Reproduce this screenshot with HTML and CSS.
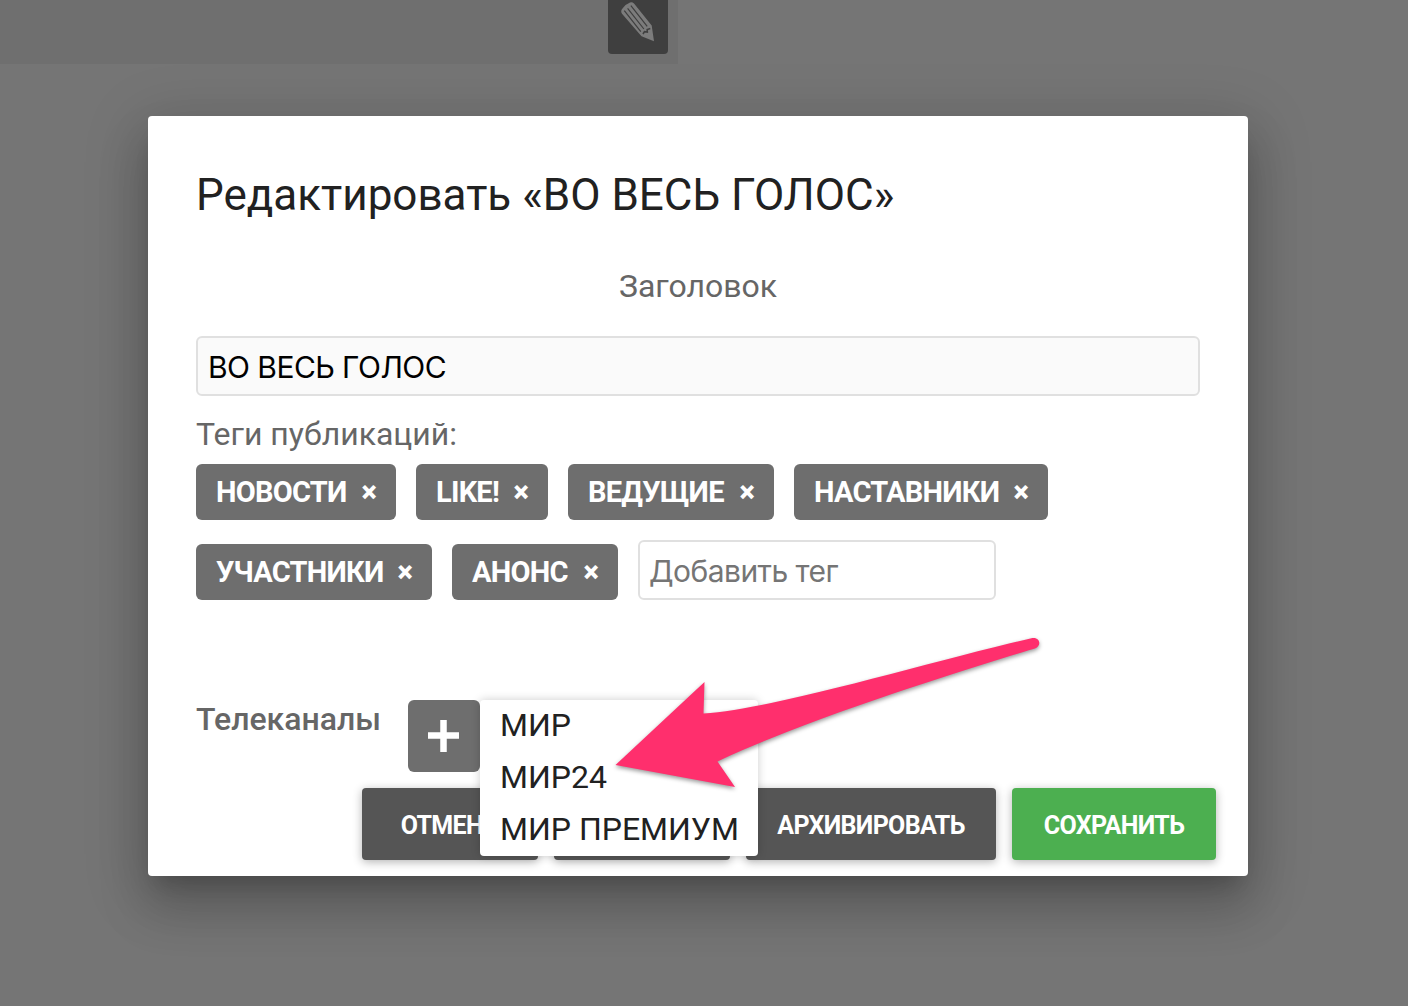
FILE: index.html
```html
<!DOCTYPE html>
<html lang="ru">
<head>
<meta charset="utf-8">
<title>Редактировать</title>
<link rel="stylesheet" href="styles.css">
</head>
<body>
<header class="strip">
  <button class="edit" aria-label="Редактировать">
    <svg width="60" height="60" viewBox="0 0 60 60">
      <path d="M46 47.200 L33.500 42.200 L14 19.800 Q12.200 17 14.500 14.500 Q18 10 22 8.600 Q24 7.600 26 9.500 L43.700 31.500 Z" fill="#7c7c7c"/>
      <path d="M16.300 16.700 L32.800 37.700 M19.600 14.300 L35.900 35 M22.900 11.700 L39.200 32.400" stroke="#3f3f3f" stroke-width="1.200" fill="none"/>
      <path d="M35 40 L36.500 37.600 L39.300 38 L39.200 35.500 L42.300 34.600" stroke="#3f3f3f" stroke-width="1.600" fill="none"/>
    </svg>
  </button>
</header>
<main class="dialog">
  <h1 class="title">Редактировать «ВО ВЕСЬ ГОЛОС»</h1>
  <label class="label" for="name">Заголовок</label>
  <input class="field" id="name" type="text" value="ВО ВЕСЬ ГОЛОС">
  <p class="caption">Теги публикаций:</p>
  <div class="tags">
    <span class="tag">НОВОСТИ <b class="remove">×</b></span>
    <span class="tag">LIKE! <b class="remove">×</b></span>
    <span class="tag">ВЕДУЩИЕ <b class="remove">×</b></span>
    <span class="tag">НАСТАВНИКИ <b class="remove">×</b></span>
    <span class="tag">УЧАСТНИКИ <b class="remove">×</b></span>
    <span class="tag">АНОНС <b class="remove">×</b></span>
    <input class="field field-tag" type="text" placeholder="Добавить тег">
  </div>
  <section class="channels">
    <span class="channels-label">Телеканалы</span>
    <div class="picker">
      <button class="add" aria-label="Добавить">
        <svg width="32" height="32" viewBox="0 0 32 32"><path d="M15.500 0V32M0 15.500H31" stroke="#fff" stroke-width="6.500"/></svg>
      </button>
      <ul class="menu">
        <li>МИР</li>
        <li>МИР24</li>
        <li>МИР ПРЕМИУМ</li>
      </ul>
    </div>
  </section>
  <footer class="actions">
    <button class="btn cancel">ОТМЕНА</button>
    <button class="btn blank"></button>
    <button class="btn archive">АРХИВИРОВАТЬ</button>
    <button class="btn save">СОХРАНИТЬ</button>
  </footer>
</main>
<svg class="arrow" width="440" height="170" viewBox="610 630 440 170">
  <path d="M615.500 765 L704.500 682 L703.500 713.500 C775 709 935 660 1032.500 638 C1040 637 1042 646 1035 648.500 C950 674 800 722 717.500 761.500 L735 787 Z" fill="#ff2f6d"/>
</svg>
</body>
</html>
```
FILE: styles.css
```css
* { box-sizing: border-box; }
body {
  margin: 0;
  height: 1006px;
  overflow: hidden;
  background: #757575;
  color: #212121;
  font-family: Roboto, "Liberation Sans", sans-serif;
  font-size: 32px;
}
button { border: 0; padding: 0; font: inherit; }
.strip {
  display: flex;
  justify-content: flex-end;
  align-items: flex-end;
  width: 678px;
  height: 64px;
  padding: 0 10px 10px 0;
  background: #6f6f6f;
}
.edit { height: 60px; width: 60px; background: #3f3f3f; border-radius: 4px; }
.edit svg { display: block; }
.dialog {
  display: flex;
  flex-direction: column;
  width: 1100px;
  height: 760px;
  margin: 52px 0 0 148px;
  padding: 48px 48px 0;
  background: #fff;
  border-radius: 4px;
  box-shadow: 0 32px 48px 4px rgba(0,0,0,.15), 0 12px 60px 8px rgba(0,0,0,.15), 0 16px 20px -10px rgba(0,0,0,.18);
}
.title { margin: 0; font-size: 44px; font-weight: 400; line-height: 62px; white-space: nowrap; }
.label { margin-top: 40px; line-height: 40px; text-align: center; color: #666; }
.field {
  height: 60px;
  margin-top: 30px;
  padding: 2px 10px 0;
  border: 2px solid #e0e0e0;
  border-radius: 6px;
  background: #fafafa;
  color: #000;
  font-family: Inter, sans-serif;
  font-size: 30px;
  letter-spacing: -.55px;
  outline: 0;
}
.caption { margin: 18px 0 0; line-height: 40px; color: #666; }
.tags { display: flex; flex-wrap: wrap; align-items: flex-end; gap: 20px; margin-top: 10px; }
.tag {
  display: flex;
  justify-content: space-between;
  height: 56px;
  padding: 0 20px;
  border-radius: 6px;
  background: #6e6e6e;
  color: #fff;
  font-size: 29px;
  font-weight: 700;
  line-height: 56px;
  letter-spacing: -.75px;
  white-space: nowrap;
}
.tag:nth-child(1) { width: 200px; }
.tag:nth-child(2) { width: 132px; }
.tag:nth-child(3) { width: 206px; }
.tag:nth-child(4) { width: 254px; }
.tag:nth-child(5) { width: 236px; }
.tag:nth-child(6) { width: 166px; }
.field-tag { width: 358px; margin: 0; padding-left: 9px; background: #fff; }
.field-tag::placeholder { color: #757575; opacity: 1; }
.channels { display: flex; align-items: flex-start; margin-top: 100px; }
.channels-label { width: 212px; margin-top: -1px; line-height: 40px; color: #666; font-weight: 500; }
.picker { position: relative; width: 72px; height: 72px; }
.add { display: grid; place-items: center; width: 72px; height: 72px; border-radius: 6px; background: #6e6e6e; }
.menu {
  position: absolute;
  left: 72px;
  top: 0;
  z-index: 1;
  width: 278px;
  height: 156px;
  margin: 0;
  padding: 0 20px;
  list-style: none;
  background: #fff;
  border-radius: 4px;
  white-space: nowrap;
  box-shadow: 0 0 10px rgba(0,0,0,.2);
}
.menu li { height: 52px; line-height: 50px; }
.actions { display: flex; justify-content: flex-end; gap: 16px; margin: 16px -16px 0 0; }
.btn {
  height: 72px;
  width: 176px;
  padding-top: 3px;
  border-radius: 4px;
  background: #555;
  color: #fff;
  font-size: 25px;
  font-weight: 700;
  letter-spacing: -.65px;
  white-space: nowrap;
  box-shadow: 0 2px 10px rgba(0,0,0,.3);
}
.archive { width: 250px; }
.save { width: 204px; background: #4caf50; }
.arrow { position: absolute; left: 610px; top: 630px; z-index: 2; filter: drop-shadow(0 2px 2px rgba(0,0,0,.4)); }
```
